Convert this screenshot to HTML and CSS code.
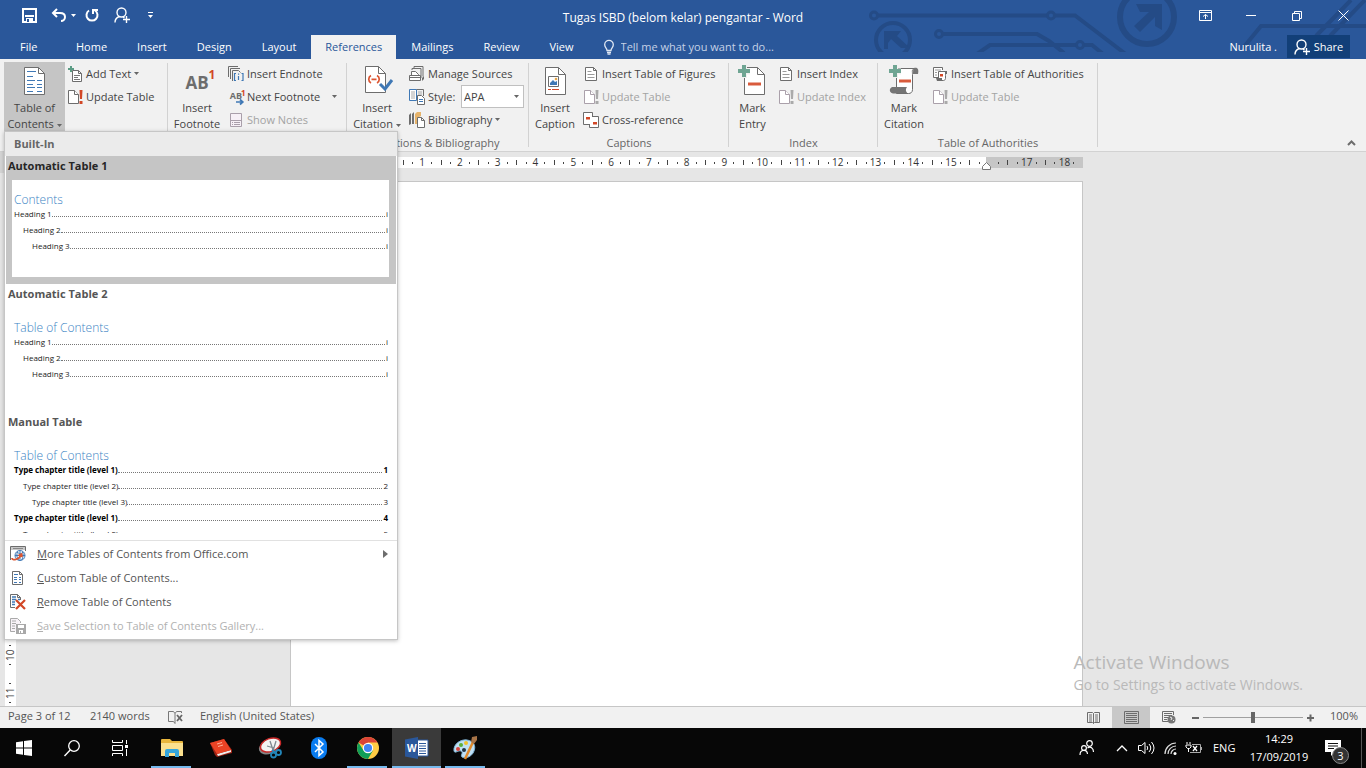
FILE: index.html
```html
<!DOCTYPE html>
<html lang="en">
<head>
    <meta charset="UTF-8">
    <meta name="viewport" content="width=device-width, initial-scale=1.0">
    <title>Tugas ISBD (belom kelar) pengantar - Word</title>
    <link rel="stylesheet" href="styles.css">
</head>
<body>
    <svg class="defs" aria-hidden="true">
        <symbol id="caret" viewBox="0 0 5 3"><path d="M0 0h5L2.500 3z" fill="currentColor"/></symbol>
        <symbol id="person" viewBox="0 0 16 16">
            <circle cx="7.500" cy="5.500" r="4.500"/>
            <path d="M1 15.500c0-3 1.500-5 4.500-6M9 10l1.500 1M12.500 9v7M9 12.500h7"/>
        </symbol>
        <symbol id="update" viewBox="0 0 16 16">
            <path d="M1.500 1.500h6l4 4v9h-10z" class="sheet"/>
            <path d="M7.500 1.500v4h4" fill="none" class="sheet"/>
            <path d="M12.500 1h3l-.5 9h-2zM12.500 12h3v3h-3z" class="bang"/>
        </symbol>
        <symbol id="list-page" viewBox="0 0 16 16">
            <path d="M2.500 1.500h8l3 3v10h-11z" fill="#fff" stroke="#6d6d6d"/>
            <path d="M10.500 1.500v3h3" fill="none" stroke="#6d6d6d"/>
            <path d="M4.500 5.500h4M4.500 8.500h7M4.500 11.500h7" stroke="#9a9a9a"/>
        </symbol>
    </svg>

    <header class="titlebar">
        <svg class="art" viewBox="865 0 501 52" width="501" height="52" aria-hidden="true">
            <g fill="none" stroke="#244b86" stroke-width="4">
                <circle cx="874" cy="15.500" r="3.500" stroke-width="3"/>
                <path d="M878 15.500h169"/>
                <circle cx="1051" cy="15.500" r="3.500" stroke-width="3"/>
                <path d="M1055 15.500h20l50 38"/>
                <circle cx="893" cy="40" r="17"/>
                <circle cx="939" cy="34" r="3.500" stroke-width="3"/>
                <path d="M943 34h94l12 7 15 12M977 54l13-9h86M1084 45h8l11 9"/>
                <circle cx="1080" cy="45" r="3.500" stroke-width="3"/>
                <circle cx="1147" cy="17" r="27" stroke-width="6"/>
                <path d="M1243 48l18-22h105M1316 36l35-36M1330 36l35-36"/>
            </g>
            <path d="M884 31h17l-4 5 13 12h-9l-10-9-3 4v6h-4zM1136 4h26v26l-7-4v-9l-15 15-6-6 15-14h-9z" fill="#244b86"/>
        </svg>
        <div class="title-row">
            <div class="quick">
                <button class="q-save" aria-label="Save"><svg width="15" height="15" viewBox="0 0 15 15"><path d="M1 1h13v13H1z" fill="none" stroke="#fff" stroke-width="2"/><path d="M3 7h9v2H3zM4 10h7v4H4z" fill="#fff"/><path d="M5 11h2v3H5z" fill="#2a579a"/></svg></button>
                <button class="q-undo" aria-label="Undo"><svg width="15" height="14" viewBox="0 0 15 14"><path d="M2 5h7c3 0 5 1.500 5 4s-2 4-4 4M6 1L2 5l4 4" fill="none" stroke="#fff" stroke-width="2"/></svg><svg class="caret" width="5" height="3"><use href="#caret"/></svg></button>
                <button class="q-redo" aria-label="Repeat"><svg width="14" height="14" viewBox="0 0 14 14"><path d="M4 2.500a5.500 5.500 0 1 0 6 0M8 6V2h5" fill="none" stroke="#fff" stroke-width="2"/></svg></button>
                <button class="q-share" aria-label="Share document"><svg class="person" width="16" height="16"><use href="#person"/></svg></button>
                <button class="q-more" aria-label="Customize Quick Access Toolbar"><svg width="5" height="6" viewBox="0 0 5 6"><path d="M0 0h5v1H0zM0 3h5L2.500 6z" fill="#fff"/></svg></button>
            </div>
            <h1 class="doc-title">Tugas ISBD (belom kelar) pengantar - Word</h1>
            <div class="window-buttons">
                <button aria-label="Ribbon Display Options"><svg width="13" height="11" viewBox="0 0 13 11"><path d="M.5.5h12v10H.5zM.5 2.500h12M6.500 9V4.500M4 6.500l2.500-2L9 6.500" fill="none" stroke="#fff"/></svg></button>
                <button aria-label="Minimize"><svg width="10" height="11" viewBox="0 0 10 11"><path d="M0 5.500h10" stroke="#fff"/></svg></button>
                <button aria-label="Restore Down"><svg width="10" height="11" viewBox="0 0 10 11"><path d="M.5 3.500h7v7h-7zM2.500 3V1.500h7v7H8" fill="none" stroke="#fff"/></svg></button>
                <button aria-label="Close"><svg width="11" height="11" viewBox="0 0 11 11"><path d="M.5.5l10 10M10.500.5l-10 10" stroke="#fff"/></svg></button>
            </div>
        </div>
        <div class="tab-row">
            <nav class="tabs">
                <a href="#" class="tab file">File</a>
                <a href="#" class="tab">Home</a>
                <a href="#" class="tab">Insert</a>
                <a href="#" class="tab">Design</a>
                <a href="#" class="tab">Layout</a>
                <a href="#" class="tab active">References</a>
                <a href="#" class="tab">Mailings</a>
                <a href="#" class="tab">Review</a>
                <a href="#" class="tab">View</a>
            </nav>
            <label class="tell-me">
                <svg width="10" height="15" viewBox="0 0 10 15"><path d="M3 10.500C3 8 .7 7.500.7 4.700a4.300 4.300 0 0 1 8.600 0C9.300 7.500 7 8 7 10.500zM3 12.500h4M3.500 14.200h3" fill="none" stroke="#dfe7f3" stroke-width="1.300"/></svg>
                <input type="text" placeholder="Tell me what you want to do..." aria-label="Tell me what you want to do">
            </label>
            <span class="user">Nurulita .</span>
            <button class="share"><svg class="person" width="16" height="16"><use href="#person"/></svg>Share</button>
        </div>
    </header>

    <section class="ribbon">
        <div class="group g-toc">
            <div class="tools">
                <button class="big pressed">
                    <svg width="32" height="32" viewBox="0 0 32 32"><path d="M5.500 2.500h14l6 6v21h-20z" fill="#fff" stroke="#6d6d6d"/><path d="M19.500 2.500v6h6" fill="none" stroke="#6d6d6d"/><path d="M8 6.500h9M8 11.500h6M8 15.500h8M8 19.500h6M8 22.500h8M8 26.500h6M18 15.500h5M18 19.500h5M18 22.500h5M18 26.500h5" stroke="#3f78b5"/></svg>
                    <span>Table of<br>Contents <svg class="caret" width="5" height="3"><use href="#caret"/></svg></span>
                </button>
                <div class="column">
                    <button class="small"><svg width="16" height="16" viewBox="0 0 16 16"><path d="M5.500 4.500h6l3 3v8h-9z" fill="#fff" stroke="#6d6d6d"/><path d="M11.500 4.500v3h3" fill="none" stroke="#6d6d6d"/><path d="M7 9.500h6M7 11.500h4M7 13.500h6" stroke="#777"/><path d="M4 0v6M1 3h6" stroke="#5c9c85" stroke-width="2"/></svg>Add Text<svg class="caret" width="5" height="3"><use href="#caret"/></svg></button>
                    <button class="small"><svg class="update" width="16" height="16"><use href="#update"/></svg>Update Table</button>
                </div>
            </div>

            <div class="gallery-menu">
                <h2 class="gallery-head">Built-In</h2>
                <div class="gallery">
                    <section class="entry selected">
                        <h3>Automatic Table 1</h3>
                        <div class="preview">
                            <h4>Contents</h4>
                            <p class="line"><span>Heading 1</span><i></i><span>i</span></p>
                            <p class="line l2"><span>Heading 2</span><i></i><span>i</span></p>
                            <p class="line l3"><span>Heading 3</span><i></i><span>i</span></p>
                        </div>
                    </section>
                    <section class="entry">
                        <h3>Automatic Table 2</h3>
                        <div class="preview">
                            <h4>Table of Contents</h4>
                            <p class="line"><span>Heading 1</span><i></i><span>i</span></p>
                            <p class="line l2"><span>Heading 2</span><i></i><span>i</span></p>
                            <p class="line l3"><span>Heading 3</span><i></i><span>i</span></p>
                        </div>
                    </section>
                    <section class="entry">
                        <h3>Manual Table</h3>
                        <div class="preview">
                            <h4>Table of Contents</h4>
                            <p class="line strong"><span>Type chapter title (level 1)</span><i></i><span>1</span></p>
                            <p class="line l2"><span>Type chapter title (level 2)</span><i></i><span>2</span></p>
                            <p class="line l3"><span>Type chapter title (level 3)</span><i></i><span>3</span></p>
                            <p class="line strong"><span>Type chapter title (level 1)</span><i></i><span>4</span></p>
                            <p class="line l2"><span>Type chapter title (level 2)</span><i></i><span>5</span></p>
                        </div>
                    </section>
                </div>
                <div class="commands">
                    <button class="command"><svg width="16" height="16" viewBox="0 0 16 16"><path d="M.5 14V.5h15V5" fill="none" stroke="#6d6d6d"/><path d="M1 1h14v3H1z" fill="#c8c8c8"/><path d="M3 2.500h10" stroke="#888"/><circle cx="10" cy="9.500" r="5" fill="#fff" stroke="#3f78b5"/><path d="M10 4.500v10M5 9.500h10M7 6c2 2 5 2 6 0M7.500 5.500c-1 3-1 6 1 8.500M12.500 5.500c1 3 1 6-1 8.500" fill="none" stroke="#3f78b5"/><path d="M2 12c0 3 7 2 9-3M8.500 9.500l3-1.500.5 3" fill="none" stroke="#dc5632" stroke-width="1.800"/></svg><span><u>M</u>ore Tables of Contents from Office.com</span><svg class="submenu" width="5" height="8" viewBox="0 0 5 8"><path d="M0 0l5 4-5 4z" fill="#6d6d6d"/></svg></button>
                    <button class="command"><svg width="16" height="16" viewBox="0 0 16 16"><path d="M2.500 1.500h7l3 3v10h-10z" fill="#fff" stroke="#6d6d6d"/><path d="M9.500 1.500v3h3" fill="none" stroke="#6d6d6d"/><path d="M4 4.500h4M4 7.500h3M4 9.500h3M4 12.500h3M9 7.500h2M9 9.500h2M9 12.500h2" stroke="#3f78b5"/></svg><span><u>C</u>ustom Table of Contents...</span></button>
                    <button class="command"><svg width="16" height="16" viewBox="0 0 16 16"><path d="M5 13.500H.5V.5h7l3 3V6" fill="#fff" stroke="#6d6d6d"/><path d="M7.500.5v3h3" fill="none" stroke="#6d6d6d"/><path d="M2 3h4M2 5.500h4M2 8h3M2 10.500h3M8 5.500h2" stroke="#3f78b5" stroke-width="1.300"/><path d="M6 6l9 9M15 6l-9 9" stroke="#d24726" stroke-width="2.200"/></svg><span><u>R</u>emove Table of Contents</span></button>
                    <button class="command" disabled><svg width="16" height="16" viewBox="0 0 16 16"><path d="M5 13.500H.5V.5h7l3 3V5" fill="#f7f2f7" stroke="#a9a9a9"/><path d="M2 3h4M2 5.500h4M2 8h3M2 10.500h3" stroke="#a9a9a9"/><path d="M6 6h10v10H6z" fill="#a9a9a9"/><path d="M8 7h6v3H8zM9 12h4v3H9z" fill="#fff"/><path d="M10 13h1v2h-1z" fill="#a9a9a9"/></svg><span><u>S</u>ave Selection to Table of Contents Gallery...</span></button>
                </div>
            </div>
        </div>

        <div class="group g-notes">
            <div class="tools">
                <button class="big">
                    <span class="ab-icon">AB<sup>1</sup></span>
                    <span>Insert<br>Footnote</span>
                </button>
                <div class="column">
                    <button class="small"><svg width="16" height="16" viewBox="0 0 16 16"><path d="M.5 11V.5H10M2.500 13V2.500H12M4.500 15V4.500h6l2 2" fill="none" stroke="#6d6d6d"/><path d="M8 7.500H6.500v7H8M13.500 7.500H15v7h-1.500M10.500 10v4" fill="none" stroke="#3f78b5" stroke-width="1.200"/><path d="M10 7.500h1.200v1.300H10z" fill="#3f78b5"/></svg>Insert Endnote</button>
                    <button class="small"><span class="ab-icon mini">AB<sup>1</sup><svg width="8" height="6" viewBox="0 0 8 6"><path d="M0 3h6M4 .5L6.800 3 4 5.500" fill="none" stroke="#3f78b5" stroke-width="1.700"/></svg></span>Next Footnote<svg class="caret split" width="5" height="3"><use href="#caret"/></svg></button>
                    <button class="small" disabled><svg width="16" height="16" viewBox="0 0 16 16"><path d="M2.500 1.500h11v13h-11z" fill="#f6f0f6" stroke="#a99faa"/><path d="M2.500 8.500h11M4 10.500h1M6 10.500h6M4 12.500h1M6 12.500h6" stroke="#a99faa"/></svg>Show Notes</button>
                </div>
            </div>
        </div>

        <div class="group g-cite">
            <div class="tools">
                <button class="big">
                    <svg width="32" height="32" viewBox="0 0 32 32"><path d="M4.500 1.500h13l7 7v19h-20z" fill="#fff" stroke="#6d6d6d"/><path d="M17.500 1.500v7h7" fill="none" stroke="#6d6d6d"/><path d="M10 10.500c-3 1.500-3 6 0 7.500M16 10.500c3 1.500 3 6 0 7.500M10.500 14.300h5" fill="none" stroke="#dc5632" stroke-width="1.700"/><path d="M19 19l5 5 7-9" fill="none" stroke="#3f78b5" stroke-width="3"/></svg>
                    <span>Insert<br>Citation <svg class="caret" width="5" height="3"><use href="#caret"/></svg></span>
                </button>
                <div class="column">
                    <button class="small"><svg width="16" height="16" viewBox="0 0 16 16"><path d="M5 2V.5h9v10M3 4V2.500h9V12" fill="none" stroke="#6d6d6d"/><path d="M2.500 9V5.500h4l3 3V9M.5 9.500h11v5H.5zM.5 11.500h11" fill="#fff" stroke="#6d6d6d"/><path d="M13 12l2-2v3l-2 2z" fill="#6d6d6d"/></svg>Manage Sources</button>
                    <div class="style-row">
                        <svg width="16" height="16" viewBox="0 0 16 16"><path d="M.5.500h7v11h-7z" fill="#fff" stroke="#3f78b5"/><path d="M7.500.5h7V7" fill="none" stroke="#6d6d6d"/><path d="M2 3h4M2 5h4M2 7h4M2 9h4M9 3h4M9 5h4" stroke="#aaa"/><path d="M8.500 6.500h4l3 3v6h-7z" fill="#fff" stroke="#6d6d6d"/><path d="M10 10.500h4M10 12.500h4" stroke="#3f78b5"/></svg>
                        <label for="style">Style:</label>
                        <span class="select-box">
                            <select id="style"><option>APA</option></select>
                            <svg class="caret" width="5" height="3"><use href="#caret"/></svg>
                        </span>
                    </div>
                    <button class="small"><svg width="16" height="16" viewBox="0 0 16 16"><path d="M0 3l2-2v11l-2 1zM3 2l2-2v12H3z" fill="#6d6d6d"/><path d="M6 2l2-2h4v4L8 6v6H6z" fill="#e6b36a"/><path d="M8.500 5.500h4l3 3v7h-7z" fill="#fff" stroke="#6d6d6d"/><path d="M12.500 5.500v3h3" fill="none" stroke="#6d6d6d"/></svg>Bibliography<svg class="caret" width="5" height="3"><use href="#caret"/></svg></button>
                </div>
            </div>
            <h2 class="group-name">Citations &amp; Bibliography</h2>
        </div>

        <div class="group g-captions">
            <div class="tools">
                <button class="big">
                    <svg width="32" height="32" viewBox="0 0 32 32"><path d="M6.500 2.500h13l7 7v20h-20z" fill="#fff" stroke="#6d6d6d"/><path d="M19.500 2.500v7h7" fill="none" stroke="#6d6d6d"/><path d="M9.500 11.500h10v10h-10z" fill="#fff" stroke="#6d6d6d"/><path d="M11 20v-2l3-3 2 2 2-1v4z" fill="#3f78b5"/><circle cx="17" cy="14" r="1.300" fill="#e6a84c"/><path d="M9 24.500h3M13 24.500h7" stroke="#d24726"/></svg>
                    <span>Insert<br>Caption</span>
                </button>
                <div class="column">
                    <button class="small"><svg width="16" height="16"><use href="#list-page"/></svg>Insert Table of Figures</button>
                    <button class="small" disabled><svg class="update" width="16" height="16"><use href="#update"/></svg>Update Table</button>
                    <button class="small"><svg width="16" height="16" viewBox="0 0 16 16"><path d="M.5.5h9v12h-9z" fill="#fff" stroke="#6d6d6d"/><path d="M9 4.500h6.500v11H6.500V12" fill="#fff" stroke="#6d6d6d"/><path d="M3 5h4v2.500H3zM10 10h4v2.500h-4z" fill="#d24726"/></svg>Cross-reference</button>
                </div>
            </div>
            <h2 class="group-name">Captions</h2>
        </div>

        <div class="group g-index">
            <div class="tools">
                <button class="big">
                    <svg width="32" height="32" viewBox="0 0 32 32"><path d="M7.500 2.500h13l7 7v20h-20z" fill="#fff" stroke="#6d6d6d"/><path d="M20.500 2.500v7h7" fill="none" stroke="#6d6d6d"/><path d="M11 19h13" stroke="#d95b3c" stroke-width="3"/><path d="M7 0v13M1 6.500h12" stroke="#f1f1f1" stroke-width="6"/><path d="M7 0v12M1 6h12" stroke="#6fa593" stroke-width="4"/></svg>
                    <span>Mark<br>Entry</span>
                </button>
                <div class="column">
                    <button class="small"><svg width="16" height="16"><use href="#list-page"/></svg>Insert Index</button>
                    <button class="small" disabled><svg class="update" width="16" height="16"><use href="#update"/></svg>Update Index</button>
                </div>
            </div>
            <h2 class="group-name">Index</h2>
        </div>

        <div class="group g-auth">
            <div class="tools">
                <button class="big">
                    <svg width="32" height="32" viewBox="0 0 32 32"><path d="M8.500 3.500h18c-3 1-2 3-2 6v15c0 3-2 4-4 4h-12z" fill="#fff" stroke="#6d6d6d"/><path d="M26 3c4-1 5 2 4 6h-5c0-3 0-5 1-6zM4 22h15c-2 3-1 5 1 6.500H5c-4-1-4-5-1-6.500z" fill="#757575"/><path d="M11 16h12" stroke="#d95b3c" stroke-width="3"/><path d="M7 0v13M1 6.500h12" stroke="#f1f1f1" stroke-width="6"/><path d="M7 0v12M1 6h12" stroke="#6fa593" stroke-width="4"/></svg>
                    <span>Mark<br>Citation</span>
                </button>
                <div class="column">
                    <button class="small"><svg width="16" height="16" viewBox="0 0 16 16"><path d="M8 11.500H1.500v-10h9V4" fill="#fff" stroke="#6d6d6d"/><path d="M3 4h6M3 6.500h2M3 9h2" stroke="#999"/><path d="M6.500 12V5.500h8c-1 1-1 2-1 4v3c0 1-1 2-2 2H6" fill="#fff" stroke="#6d6d6d"/><path d="M13 5h2v3h-2zM4 12h6v3H5z" fill="#6d6d6d"/><path d="M8 8h3v2.500H8z" fill="#d24726"/></svg>Insert Table of Authorities</button>
                    <button class="small" disabled><svg class="update" width="16" height="16"><use href="#update"/></svg>Update Table</button>
                </div>
            </div>
            <h2 class="group-name">Table of Authorities</h2>
        </div>
        <button class="collapse" aria-label="Collapse the Ribbon"><svg width="9" height="6" viewBox="0 0 9 6"><path d="M1 5l3.500-3.500L8 5" fill="none" stroke="#6d6d6d" stroke-width="2"/></svg></button>
    </section>

    <div class="ruler-row">
        <div class="tab-stop"></div>
        <div class="ruler-area">
            <div class="ruler" id="ruler">
                <svg class="indent" width="9" height="8" viewBox="0 0 9 8"><path d="M.5 7.500v-3l4-4 4 4v3z" fill="#fff" stroke="#777"/></svg>
            </div>
        </div>
    </div>

    <main class="workspace">
        <div class="side-ruler">
            <div class="side-cell">10</div>
            <div class="side-cell">11</div>
        </div>
        <div class="canvas">
            <div class="page"></div>
        </div>
        <div class="activate">
            <p class="activate-title">Activate Windows</p>
            <p>Go to Settings to activate Windows.</p>
        </div>
    </main>

    <footer class="status">
        <span class="pages">Page 3 of 12</span>
        <span class="words">2140 words</span>
        <button class="proof" aria-label="Proofing errors"><svg width="15" height="13" viewBox="0 0 15 13"><path d="M7 12.500L5.500 10.500h-5V.500h5L7 2.500zM7 2.500L8.500.500h5V2" fill="none" stroke="#777"/><path d="M9 4l5 6M14 4L9 10" stroke="#666" stroke-width="1.800"/></svg></button>
        <span>English (United States)</span>
        <div class="views">
            <button aria-label="Read Mode"><svg width="13" height="12" viewBox="0 0 13 12"><path d="M6.500 11.500l-1-1h-5V.5h5l1 1 1-1h5v10h-5zM6.500 1.500v10M2 3h3M2 5h3M2 7h3M2 9h3M8 3h3M8 5h3M8 7h3M8 9h3" fill="none" stroke="#6d6d6d"/></svg></button>
            <button class="on" aria-label="Print Layout"><svg width="15" height="13" viewBox="0 0 15 13"><path d="M.5.5h14v12H.5zM2 2.500h11M2 4.500h11M2 6.500h11M2 8.500h11M2 10.500h11" fill="none" stroke="#6d6d6d"/></svg></button>
            <button aria-label="Web Layout"><svg width="14" height="13" viewBox="0 0 14 13"><path d="M6 10.500H.5V.5h11V4M2 2.500h8M2 4.500h8M2 6.500h4M2 8.500h3" fill="none" stroke="#6d6d6d"/><circle cx="9.500" cy="8.500" r="4" fill="#777"/><path d="M8 6l2 1-1 2M11 9l1 1" stroke="#eee" fill="none"/></svg></button>
        </div>
        <div class="zoom">
            <button class="minus" aria-label="Zoom Out"></button>
            <input type="range" min="0" max="100" value="50" aria-label="Zoom">
            <button class="plus" aria-label="Zoom In"></button>
        </div>
        <span class="percent">100%</span>
    </footer>

    <footer class="taskbar">
        <div class="system">
            <button aria-label="Start"><svg width="16" height="16" viewBox="0 0 16 16"><path d="M0 2.200L7 1.200v6.300H0zM8 1l8-1v7.500H8zM0 8.500h7v6.300l-7-1zM8 8.500h8V16l-8-1z" fill="#fff"/></svg></button>
            <button aria-label="Search"><svg width="16" height="17" viewBox="0 0 16 17"><circle cx="10" cy="6" r="5.300" fill="none" stroke="#fff" stroke-width="1.300"/><path d="M6.200 10L.5 16" stroke="#fff" stroke-width="1.400"/></svg></button>
            <button aria-label="Task View"><svg width="16" height="16" viewBox="0 0 16 16"><path d="M.5 0v2.500h10V0M.5 16v-2.500h10V16M.5 5.500h10v5H.5zM14.500 0v4M14.500 9v7" fill="none" stroke="#fff"/><path d="M13 5h3v3h-3z" fill="#fff"/></svg></button>
        </div>
        <div class="apps">
            <button class="open" aria-label="File Explorer"><svg width="22" height="18" viewBox="0 0 22 18"><path d="M0 1q0-1 1-1h8l2 2h10q1 0 1 1v14H0z" fill="#e9b63c"/><path d="M0 4h22v13H0z" fill="#fbe08e"/><path d="M4 18v-6q0-2 2-2h10q2 0 2 2v6h-4v-4H8v4z" fill="#35a6dc"/></svg></button>
            <button aria-label="Dictionary"><svg width="22" height="20" viewBox="0 0 22 20"><path d="M0 5l14-4 8 11v3L7 19 5 17z" fill="#9e2315"/><path d="M7 16l14-4v2L8 18z" fill="#eee"/><path d="M0 5l14-4 7 11-14 4z" fill="#ea4325"/><path d="M7 6l5-1.500M8 8.500l5-1.500" stroke="#ffb29a"/></svg></button>
            <button aria-label="Snipping Tool"><svg width="24" height="22" viewBox="0 0 24 22"><ellipse cx="11" cy="10" rx="10.500" ry="7" fill="#858585" transform="rotate(-20 11 10)"/><ellipse cx="12.500" cy="8" rx="10.500" ry="6.500" fill="#f3f3f3" stroke="#c82828" stroke-width="1.500" transform="rotate(-20 12.500 8)"/><path d="M12 4l4 12M18 4l-3 10M9 9l7 2" stroke="#7f8890" stroke-width="1.300"/><g fill="none" stroke="#2386b9" stroke-width="1.800"><circle cx="15.500" cy="18" r="2.500"/><circle cx="20.500" cy="15.500" r="2.500"/><path d="M14 13l4 3"/></g></svg></button>
            <button aria-label="Bluetooth"><svg width="16" height="22" viewBox="0 0 16 22"><rect width="16" height="22" rx="8" fill="#0a7cf0"/><path d="M4 7l8 8-4 3.500v-15L12 7l-8 8" fill="none" stroke="#fff" stroke-width="1.500"/></svg></button>
            <button class="open" aria-label="Google Chrome"><svg width="22" height="22" viewBox="0 0 22 22"><circle cx="11" cy="11" r="11" fill="#fc4"/><path d="M11 11L1.500 5.500A11 11 0 0 1 20.500 5.500H11z" fill="#db4437"/><path d="M1.500 5.500A11 11 0 0 0 11 22l4.800-8.200L11 11 6.500 13.500z" fill="#0f9d58"/><circle cx="11" cy="11" r="5.200" fill="#fff"/><circle cx="11" cy="11" r="4.100" fill="#4285f4"/></svg></button>
            <button class="open current" aria-label="Word"><svg width="23" height="22" viewBox="0 0 23 22"><path d="M11 3h12v16H11z" fill="#fff" stroke="#2a579a"/><path d="M14 6.500h7M14 9h7M14 11.500h7M14 14h7M14 16.500h7" stroke="#2a579a"/><path d="M0 2.500L13 0v22L0 19.500z" fill="#2a579a"/><text x="2" y="15" font-size="10" font-weight="700" fill="#fff">W</text></svg></button>
            <button class="open" aria-label="Paint"><svg width="25" height="24" viewBox="0 0 25 24"><path d="M1 15C0 8 8 3 14 4c7 1 9 6 7 11-2 6-9 8-12 6-2-2 2-4-1-6-3-1-6 3-7 0z" fill="#bfe0f4" stroke="#7fb4d6"/><circle cx="5" cy="13" r="2" fill="#d9433c"/><circle cx="8" cy="9" r="2" fill="#5dae3b"/><circle cx="13" cy="7" r="2" fill="#f0c02e"/><circle cx="11" cy="14" r="2" fill="#234"/><path d="M12 23l8-17" stroke="#e08a2c" stroke-width="2.500"/><path d="M18 6l1-5 5-1v4l-3 4z" fill="#a87447"/></svg></button>
        </div>
        <div class="tray">
            <button class="people" aria-label="People"><svg width="16" height="16" viewBox="0 0 16 16"><g fill="none" stroke="#fff" stroke-width="1.200"><circle cx="10.500" cy="3.500" r="2.800"/><circle cx="5" cy="8" r="2.400"/><path d="M1 15c0-6 7-6 7.500-1M8.500 8c3-2 6 0 6 4"/></g></svg></button>
            <button aria-label="Show hidden icons"><svg width="12" height="7" viewBox="0 0 12 7"><path d="M1 6l5-5 5 5" fill="none" stroke="#fff" stroke-width="1.300"/></svg></button>
            <button aria-label="Volume"><svg width="17" height="14" viewBox="0 0 17 14"><path d="M.5 4.500h3L7 1.500v11l-3.500-3h-3zM9 5q1.500 2 0 4M11 3q3.500 4 0 8M13.500 1q5 6 0 12" fill="none" stroke="#fff"/></svg></button>
            <button aria-label="Network"><svg width="13" height="13" viewBox="0 0 13 13"><path d="M1 12A11 11 0 0 1 12 1M4 12A8 8 0 0 1 12 4M7 12a5 5 0 0 1 5-5" fill="none" stroke="#ddd" stroke-width="1.200"/><circle cx="11" cy="11.500" r="1.500" fill="#fff"/></svg></button>
            <button aria-label="Battery"><svg width="16" height="12" viewBox="0 0 16 12"><path d="M6 2.500h8.500v8H4M15.500 5v3" fill="none" stroke="#aaa"/><path d="M1 0v2M4 0v2M0 3h5v2L3.500 6.500h-2L0 5zM2.500 6v4" fill="none" stroke="#fff"/><path d="M7 4l4 5M11 4L7 9" stroke="#fff" stroke-width="1.300"/></svg></button>
            <span class="lang">ENG</span>
            <time class="clock">14:29<br>17/09/2019</time>
            <button class="notify" aria-label="Notifications"><svg width="16" height="16" viewBox="0 0 16 16"><path d="M0 0h16v12h-6l-4 4v-4H0z" fill="#fff"/><path d="M3 3.500h10M3 6h10M3 8.500h6" stroke="#111"/></svg><span class="badge">3</span></button>
        </div>
    </footer>

    <script>
        const ruler = document.getElementById('ruler');

        for (let cm = 1; cm <= 18; cm++) {
            const cell = document.createElement('div');
            cell.className = 'cm';
            // the indent marker sits on 16, so that number is left out
            const label = cm === 16 ? '' : cm;
            cell.innerHTML = `<i class="tick"></i><i class="dot"></i><span>${label}</span><i class="dot"></i>`;
            ruler.appendChild(cell);
        }
    </script>
</body>
</html>
```
FILE: styles.css
```css
* {
    box-sizing: border-box;
}

body {
    margin: 0;
    height: 100vh;
    display: flex;
    flex-direction: column;
    overflow: hidden;
    font-family: 'Open Sans', 'Noto Sans', sans-serif;
    font-size: 11px;
    line-height: 16px;
    color: #444;
    background: #e6e6e6;
}

h1, h2, h3, h4, p {
    margin: 0;
    font-size: 11px;
    font-weight: 400;
}

button, input, select {
    font: inherit;
    color: inherit;
    border: 0;
    padding: 0;
    background: none;
}

button {
    display: flex;
    align-items: center;
    justify-content: center;
    white-space: nowrap;
}

svg {
    flex: none;
    overflow: visible;
}

.defs {
    position: absolute;
    width: 0;
    height: 0;
}

.caret {
    color: #666;
}

.person {
    fill: none;
    stroke: #fff;
    stroke-width: 1.4;
}

/* title bar */
.titlebar {
    position: relative;
    color: #fff;
    background: #2a579a;
}

.art {
    position: absolute;
    top: 0;
    right: 0;
    overflow: hidden;
}

.title-row {
    position: relative;
    display: grid;
    grid-template-columns: 1fr auto 1fr;
    height: 35px;
}

.quick {
    display: flex;
    align-items: center;
    height: 30px;
    padding-left: 21px;
}

.quick .caret {
    color: #fff;
}

.quick button {
    width: 30px;
}

.quick .q-save {
    width: 16px;
    margin-right: 12px;
}

.quick .q-undo {
    width: 28px;
    gap: 5px;
}

.quick .q-redo {
    width: 30px;
}

.quick .q-more {
    width: 26px;
}

.doc-title {
    font-size: 12px;
    line-height: 35px;
}

.window-buttons {
    display: flex;
    justify-content: flex-end;
    height: 30px;
}

.window-buttons button {
    width: 46px;
}

.tab-row {
    position: relative;
    display: flex;
    height: 24px;
}

.tabs {
    display: flex;
}

.tab {
    padding: 0 15px;
    line-height: 24px;
    color: #fff;
    text-decoration: none;
}

.tab.file {
    width: 61px;
    padding: 0 0 0 20px;
}

.tab.active {
    padding: 0 14px;
    color: #2a579a;
    background: #f1f1f1;
}

.tell-me {
    display: flex;
    align-items: center;
    gap: 7px;
    flex: 1;
    padding-left: 15px;
}

.tell-me input {
    width: 200px;
}

.tell-me input::placeholder {
    color: #c5d2e6;
    opacity: 1;
}

.user {
    padding-right: 10px;
    line-height: 24px;
}

.share {
    gap: 4px;
    width: 63px;
    height: 23px;
    margin-right: 16px;
    background: #123f78;
}

/* ribbon */
.ribbon {
    display: flex;
    height: 93px;
    background: #f1f1f1;
    border-bottom: 1px solid #d2d2d2;
}

.group {
    position: relative;
    display: flex;
    flex-direction: column;
    padding-top: 3px;
}

.group::after {
    content: '';
    position: absolute;
    top: 4px;
    right: 0;
    width: 1px;
    height: 84px;
    background: #d2d2d2;
}

.g-toc { width: 168px; padding-left: 4px; z-index: 2; }
.g-notes { width: 179px; }
.g-cite { width: 182px; }
.g-captions { width: 200px; }
.g-index { width: 149px; }
.g-auth { width: 220px; }

.g-toc .big { width: 61px; }
.g-notes .big { width: 58px; }
.g-cite .big { width: 60px; }
.g-captions .big { width: 52px; }
.g-index .big { width: 47px; }
.g-auth .big { width: 52px; }

.tools {
    display: flex;
}

.big {
    flex: none;
    flex-direction: column;
    justify-content: flex-start;
    gap: 3px;
    height: 70px;
    padding-top: 3px;
}

.big .caret {
    vertical-align: middle;
}

.pressed {
    background: #c5c5c5;
}

.ab-icon {
    position: relative;
    display: block;
    height: 32px;
    font-size: 17px;
    font-weight: 700;
    line-height: 36px;
    color: #6d6d6d;
}

.ab-icon sup {
    position: absolute;
    left: 100%;
    top: 4px;
    font-size: 12px;
    line-height: 12px;
    color: #d24726;
}

.ab-icon.mini {
    width: 16px;
    height: 16px;
    font-size: 9px;
    line-height: 14px;
}

.mini sup {
    left: 13px;
    top: 0;
    font-size: 8px;
    line-height: 8px;
}

.mini svg {
    position: absolute;
    right: 0;
    bottom: 0;
}

.column {
    padding-left: 2px;
}

.small {
    gap: 3px;
    height: 23px;
}

.small .split {
    margin-left: 9px;
}

.small:disabled {
    color: #a3a3a3;
}

.update {
    stroke: #6d6d6d;
    fill: #d24726;
}

.bang {
    stroke: none;
}

.sheet {
    fill: #fff;
}

.small:disabled .update {
    stroke: #aaa0aa;
    fill: #aaa;
}

.style-row {
    display: flex;
    align-items: center;
    gap: 3px;
    height: 23px;
}

.select-box {
    position: relative;
    margin-left: auto;
}

.select-box select {
    appearance: none;
    width: 63px;
    height: 23px;
    padding: 0 2px;
    border: 1px solid #c0c0c0;
    background: #fff;
    display: block;
}

.select-box .caret {
    position: absolute;
    right: 5px;
    top: 10px;
}

.g-cite .column {
    width: 117px;
}

.group-name {
    padding-top: 3px;
    text-align: center;
    color: #666;
}

.collapse {
    align-self: flex-end;
    margin: 0 10px 5px auto;
}

/* table of contents menu */
.gallery-menu {
    position: absolute;
    z-index: 1;
    left: 4px;
    top: 72px;
    width: 394px;
    padding-bottom: 1px;
    border: 1px solid #c6c6c6;
    background: #fff;
    box-shadow: 0 1px 4px rgba(0, 0, 0, 0.25);
}

.gallery-head {
    padding-left: 9px;
    font-weight: 700;
    line-height: 24px;
    color: #666;
    background: #ebebeb;
}

.gallery {
    height: 377px;
    padding: 0 1px;
    overflow: hidden;
}

.entry {
    height: 128px;
    padding: 2px 7px 7px 6px;
}

.entry h3 {
    margin-left: -4px;
    font-weight: 700;
    color: #555;
}

.entry.selected {
    background: #c5c5c5;
}

.selected h3 {
    color: #262626;
}

.preview {
    height: 97px;
    margin-top: 6px;
    padding: 12px 1px 0 2px;
    background: #fff;
}

.preview h4 {
    font-size: 12px;
    font-weight: 300;
    line-height: 16px;
    color: #3c84c4;
}

.line {
    display: flex;
    font-size: 8px;
    line-height: 16px;
    color: #222;
}

.preview h4 + .line {
    margin-top: -2px;
}

.line i {
    flex: 1;
    height: 11px;
    margin-right: 1px;
    border-bottom: 1px dotted #777;
}

.l2 {
    padding-left: 9px;
}

.l3 {
    padding-left: 18px;
}

.strong span {
    font-weight: 700;
    color: #000;
}

.commands {
    margin-top: 7px;
    padding-top: 1px;
    border-top: 1px solid #e1e1e1;
}

.command {
    justify-content: flex-start;
    gap: 11px;
    width: 100%;
    height: 24px;
    padding: 0 9px 0 5px;
    color: #555;
}

.command:disabled {
    color: #b1b1b1;
}

.submenu {
    margin-left: auto;
}

/* rulers and page */
.ruler-row {
    display: flex;
    height: 29px;
}

.tab-stop {
    width: 16px;
    height: 21px;
    background: #d5d5d5;
}

.ruler-area, .canvas {
    flex: 1;
    padding-right: 9px;
}

.ruler {
    position: relative;
    display: flex;
    width: 792px;
    height: 11px;
    margin: 5px auto 0;
    padding: 0 4px 0 108px;
    background: linear-gradient(to right, #c6c6c6 94px, #fff 94px, #fff 695px, #c6c6c6 695px);
}

.cm {
    display: flex;
    flex: 1;
    font-size: 10px;
    line-height: 11px;
    color: #333;
}

.cm > * {
    display: flex;
    justify-content: center;
    align-items: center;
    flex: 1;
    width: 0;
}

.tick::before {
    content: '';
    width: 1px;
    height: 5px;
    background: #444;
}

.dot::before {
    content: '';
    width: 1px;
    height: 2px;
    background: #444;
}

.indent {
    position: absolute;
    left: 691px;
    top: 5px;
}

.workspace {
    position: relative;
    display: flex;
    flex: 1;
    min-height: 0;
    overflow: hidden;
}

.side-ruler {
    display: flex;
    flex-direction: column;
    justify-content: flex-end;
    width: 11px;
    margin-left: 5px;
    background: #fff;
}

.side-cell {
    display: flex;
    align-items: center;
    justify-content: space-between;
    height: 38px;
    writing-mode: vertical-rl;
    transform: rotate(180deg);
    font-size: 10px;
    line-height: 11px;
    padding: 9px 0;
}

.side-cell:last-child {
    margin-bottom: -6px;
}

.side-cell::before, .side-cell::after {
    content: '';
    width: 2px;
    height: 1px;
    background: #444;
}

.page {
    width: 793px;
    height: 100%;
    margin: 0 auto;
    background: #fff;
    border: 1px solid #c6c6c6;
    border-bottom: 0;
}

.activate {
    position: absolute;
    right: 63px;
    bottom: 11px;
    color: #b9b9b9;
}

.activate p {
    font-size: 14px;
    line-height: 20px;
}

.activate .activate-title {
    font-size: 19px;
    line-height: 25px;
}

/* status bar */
.status {
    display: flex;
    align-items: center;
    height: 22px;
    padding-left: 8px;
    color: #555;
    background: #f1f1f1;
    border-top: 1px solid #c6c6c6;
}

.status span {
    padding-bottom: 3px;
}

.pages {
    width: 82px;
}

.words {
    width: 78px;
}

.proof {
    margin-right: 17px;
}

.views {
    display: flex;
    height: 100%;
    margin-left: auto;
}

.views button {
    width: 38px;
}

.views .on {
    background: #c8c8c8;
}

.zoom {
    display: flex;
    align-items: center;
    gap: 4px;
    margin-left: 4px;
}

.minus, .plus {
    position: relative;
    width: 7px;
    height: 9px;
}

.minus::before, .plus::before, .plus::after {
    content: '';
    position: absolute;
    left: 0;
    top: 4px;
    width: 7px;
    height: 2px;
    background: #666;
}

.plus::after {
    transform: rotate(90deg);
}

.zoom input {
    appearance: none;
    width: 100px;
    height: 11px;
    margin: 0;
    background: linear-gradient(#a0a0a0, #a0a0a0) center / 100% 1px no-repeat;
}

.zoom input::-webkit-slider-thumb {
    appearance: none;
    width: 4px;
    height: 11px;
    background: #666;
}

.percent {
    width: 52px;
    padding-right: 8px;
    text-align: right;
}

/* taskbar */
.taskbar {
    display: flex;
    height: 40px;
    color: #fff;
    background: #070707;
}

.system, .apps, .tray {
    display: flex;
}

.system button {
    width: 48px;
}

.apps {
    padding-left: 3px;
}

.apps button {
    position: relative;
    width: 49px;
}

.apps .open::after {
    content: '';
    position: absolute;
    left: 4px;
    right: 5px;
    bottom: 0;
    height: 2px;
    background: #76b9ed;
}

.apps .current {
    background: #3a3a3a;
}

.apps .current::after {
    left: 0;
    right: 0;
}

.tray {
    align-items: center;
    margin-left: auto;
    padding-right: 4px;
}

.tray button {
    width: 24px;
    height: 40px;
}

.tray .people {
    margin-right: 11px;
}

.lang {
    width: 38px;
    padding-left: 7px;
}

.clock {
    width: 70px;
    line-height: 18px;
    text-align: center;
}

.tray .notify {
    position: relative;
    width: 48px;
    padding-right: 9px;
    border-right: 1px solid #555;
}

.badge {
    position: absolute;
    right: 12px;
    top: 19px;
    width: 17px;
    height: 17px;
    border: 1px solid #888;
    border-radius: 50%;
    line-height: 15px;
    background: #333;
}
```
